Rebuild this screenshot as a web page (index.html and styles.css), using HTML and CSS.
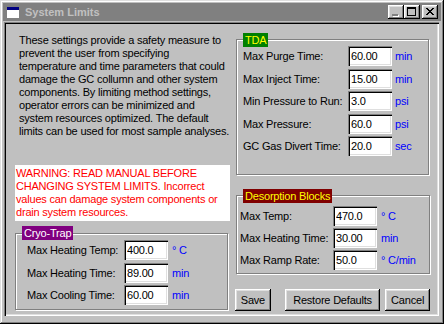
FILE: index.html
```html
<html>
  <head>
    <link rel="stylesheet" href="styles.css">
  </head>
  <body>
    <div class="window">
      <div class="titlebar">
        <svg class="app-icon" width="14" height="13" viewBox="0 0 14 13">
          <rect x="0" y="0" width="14" height="13" fill="#dfdfdf"/>
          <rect x="0.5" y="0.5" width="13" height="12" fill="none" stroke="#808080"/>
          <rect x="1" y="1" width="12" height="3" fill="#000080"/>
          <rect x="1" y="4" width="12" height="8" fill="#ffffff"/>
        </svg>
        <span class="title">System Limits</span>
        <div class="title-buttons">
          <span class="tbtn">
            <svg width="16" height="14" viewBox="0 0 16 14">
              <rect x="5" y="10" width="6" height="2" fill="#ffffff"/>
              <rect x="4" y="9" width="6" height="2" fill="#808080"/>
            </svg>
          </span>
          <span class="tbtn">
            <svg width="16" height="14" viewBox="0 0 16 14">
              <rect x="3.5" y="2.5" width="8" height="8" fill="none" stroke="#000"/>
              <rect x="3" y="2" width="9" height="2" fill="#000"/>
            </svg>
          </span>
          <span class="tbtn close">
            <svg width="16" height="14" viewBox="0 0 16 14">
              <path d="M4 3 L11 10 M5 3 L12 10 M11 3 L4 10 M12 3 L5 10" stroke="#000" stroke-width="1"/>
            </svg>
          </span>
        </div>
      </div>

      <div class="panel">
        <div class="col-left">
          <p class="intro">These settings provide a safety measure to<br>prevent the user from specifying<br>temperature and time parameters that could<br>damage the GC collumn and other system<br>components. By limiting method settings,<br>operator errors can be minimized and<br>system resources optimized. The default<br>limits can be used for most sample analyses.</p>

          <p class="warning">WARNING: READ MANUAL BEFORE<br>CHANGING SYSTEM LIMITS. Incorrect<br>values can damage system components or<br>drain system resources.</p>

          <div class="group cryo">
            <span class="group-title purple">Cryo-Trap</span>
            <div class="field"><label>Max Heating Temp:</label><input type="text" value="400.0"><span class="unit">° C</span></div>
            <div class="field"><label>Max Heating Time:</label><input type="text" value="89.00"><span class="unit">min</span></div>
            <div class="field"><label>Max Cooling Time:</label><input type="text" value="60.00"><span class="unit">min</span></div>
          </div>
        </div>

        <div class="col-right">
          <div class="group tda">
            <span class="group-title green">TDA</span>
            <div class="field"><label>Max Purge Time:</label><input type="text" value="60.00"><span class="unit">min</span></div>
            <div class="field"><label>Max Inject Time:</label><input type="text" value="15.00"><span class="unit">min</span></div>
            <div class="field"><label>Min Pressure to Run:</label><input type="text" value="3.0"><span class="unit">psi</span></div>
            <div class="field"><label>Max Pressure:</label><input type="text" value="60.0"><span class="unit">psi</span></div>
            <div class="field"><label>GC Gas Divert Time:</label><input type="text" value="20.0"><span class="unit">sec</span></div>
          </div>

          <div class="group desorb">
            <span class="group-title maroon">Desorption Blocks</span>
            <div class="field"><label>Max Temp:</label><input type="text" value="470.0"><span class="unit">° C</span></div>
            <div class="field"><label>Max Heating Time:</label><input type="text" value="30.00"><span class="unit">min</span></div>
            <div class="field"><label>Max Ramp Rate:</label><input type="text" value="50.0"><span class="unit">° C/min</span></div>
          </div>

          <div class="buttons">
            <button class="btn-save">Save</button>
            <button class="btn-restore">Restore Defaults</button>
            <button class="btn-cancel">Cancel</button>
          </div>
        </div>
      </div>
    </div>
  </body>
</html>
```

FILE: styles.css
```css
body {
  margin: 0;
  background: #c0c0c0;
  font-family: "Liberation Sans", Arial, sans-serif;
  font-size: 11px;
  letter-spacing: -0.2px;
}
.window {
  width: 444px;
  height: 324px;
  box-sizing: border-box;
  padding: 3px;
  background: #c0c0c0;
  box-shadow: inset -1px -1px #000, inset 1px 1px #dfdfdf,
    inset -2px -2px #808080, inset 2px 2px #fff;
}
.titlebar {
  height: 18px;
  background: #808080;
  display: flex;
  align-items: center;
}
.app-icon {
  margin-left: 3px;
  margin-right: 5px;
}
.title {
  color: #c0c0c0;
  font-weight: bold;
  letter-spacing: 0;
  flex: 1;
}
.title-buttons {
  display: flex;
  margin-right: 3px;
}
.tbtn {
  width: 16px;
  height: 14px;
  background: #c0c0c0;
  box-shadow: inset -1px -1px #000, inset 1px 1px #fff,
    inset -2px -2px #808080, inset 2px 2px #dfdfdf;
}
.tbtn svg {
  display: block;
}
.tbtn.close {
  margin-left: 2px;
}
.panel {
  margin: 1px 2px 0 1px;
  height: 294px;
  box-sizing: border-box;
  padding: 11px 0 0 11px;
  display: flex;
  gap: 6px;
  box-shadow: inset 1px 1px #808080, inset 2px 2px #000,
    inset -1px -1px #fff, inset -2px -2px #dfdfdf;
}
.col-left {
  width: 215px;
  display: flex;
  flex-direction: column;
}
.col-right {
  width: 194px;
  display: flex;
  flex-direction: column;
}
.intro {
  margin: 1px 0 0 0;
  padding-left: 4px;
  line-height: 13px;
}
.warning {
  margin: 27px 0 0 0;
  padding: 2px 0 2px 1px;
  background: #fff;
  color: #ff0000;
  line-height: 13px;
}
.group {
  position: relative;
  box-sizing: border-box;
  border: 1px solid #808080;
  box-shadow: inset 1px 1px #fff, 1px 1px #fff;
  display: flex;
  flex-direction: column;
}
.group-title {
  position: absolute;
  left: 6px;
  top: -7px;
  padding: 0 2px;
  line-height: 14px;
}
.purple {
  background: #800080;
  color: #fff;
  top: -8px;
}
.green {
  background: #008000;
  color: #ffff00;
}
.maroon {
  background: #800000;
  color: #ffff00;
}
.field {
  display: flex;
  align-items: center;
  height: 20px;
  flex: none;
}
.field label {
  flex: none;
}
.field input {
  width: 44px;
  height: 20px;
  box-sizing: border-box;
  border: none;
  padding: 0 0 0 3px;
  margin: 0;
  font: inherit;
  letter-spacing: -0.2px;
  color: #000;
  background: #fff;
  box-shadow: inset 1px 1px #808080, inset 2px 2px #000,
    inset -1px -1px #fff, inset -2px -2px #dfdfdf;
}
.unit {
  color: #0000ff;
}
.cryo {
  margin-top: 12px;
  width: 213px;
  height: 77px;
  padding: 6px 0 0 11px;
  gap: 2.5px;
}
.cryo label {
  width: 97px;
}
.cryo .unit {
  margin-left: 4px;
}
.tda {
  margin-top: 6px;
  width: 193px;
  height: 136px;
  padding: 6px 0 0 6px;
  gap: 2.5px;
}
.tda label {
  width: 105px;
}
.tda .unit {
  margin-left: 3px;
}
.desorb {
  margin-top: 20px;
  width: 194px;
  height: 79px;
  padding: 10px 0 0 3px;
  gap: 2px;
}
.desorb label {
  width: 93px;
}
.desorb .unit {
  margin-left: 4px;
}
.buttons {
  display: flex;
  margin-top: 15px;
  margin-left: -1px;
}
.buttons button {
  height: 22px;
  border: none;
  padding: 0;
  font: inherit;
  letter-spacing: -0.2px;
  color: #000;
  background: #c0c0c0;
  box-shadow: inset -1px -1px #000, inset 1px 1px #fff,
    inset -2px -2px #808080, inset 2px 2px #dfdfdf;
}
.btn-save {
  width: 36px;
}
.btn-restore {
  width: 96px;
  margin-left: 14px;
}
.btn-cancel {
  width: 45px;
  margin-left: 5px;
}
```
